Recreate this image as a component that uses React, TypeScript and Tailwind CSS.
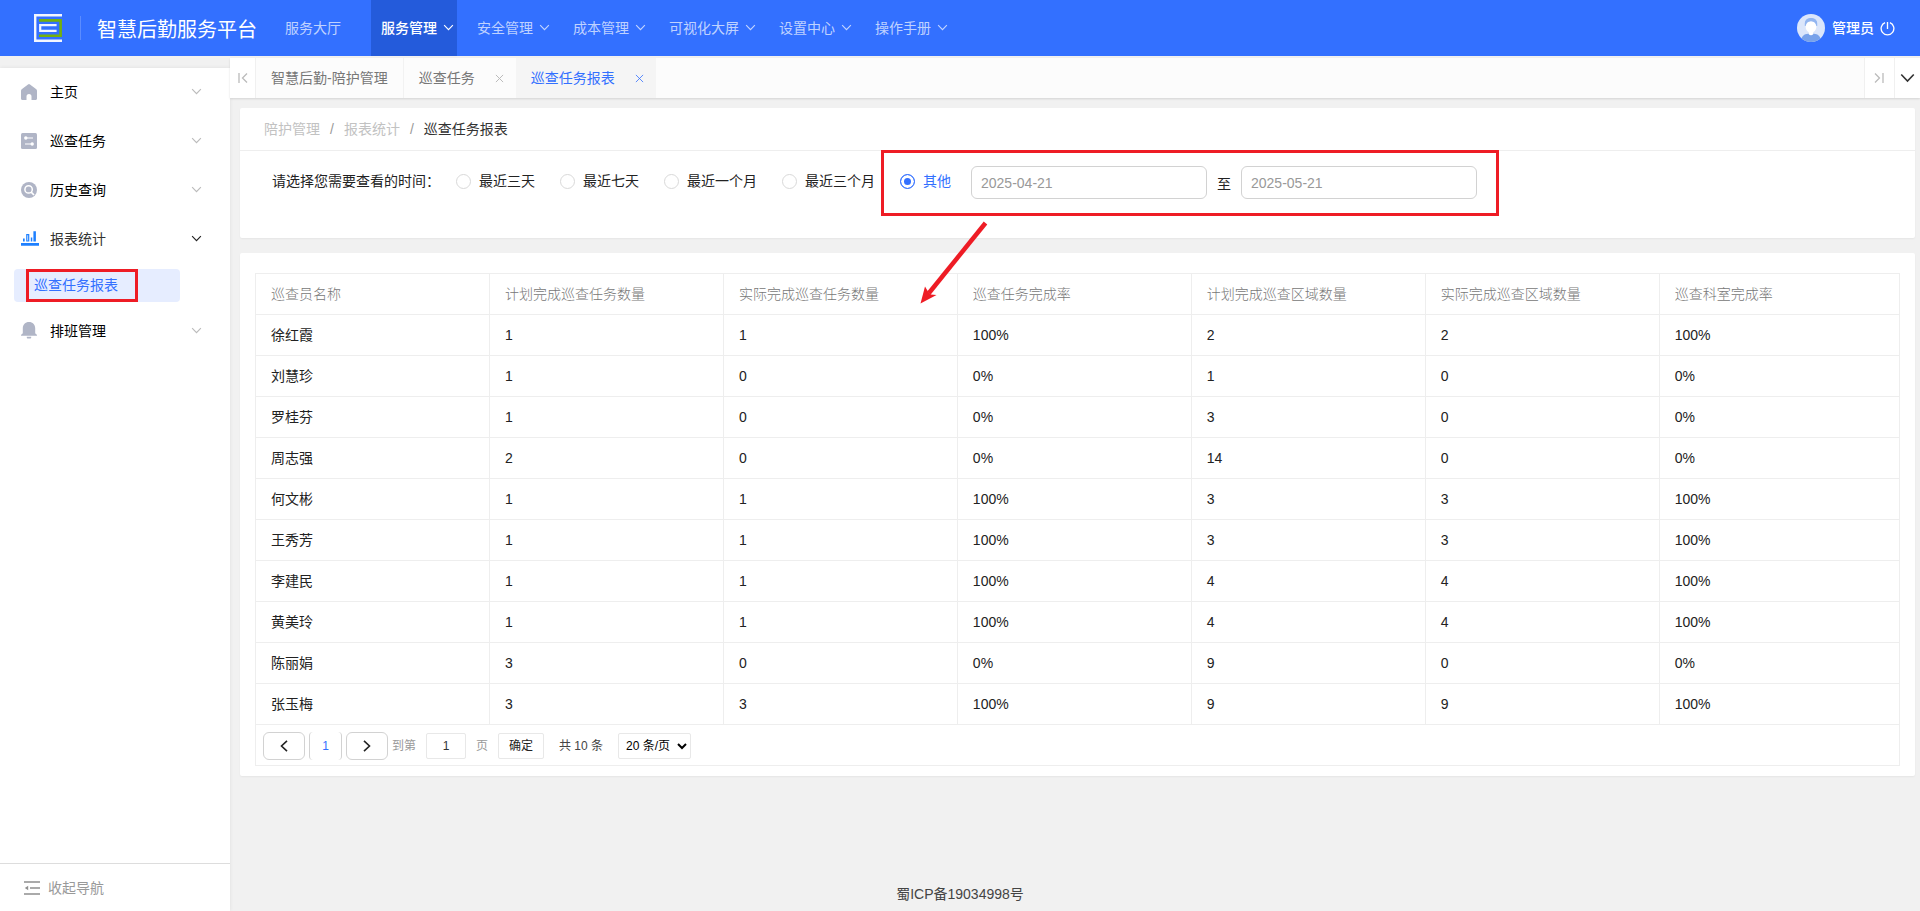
import { FC, ReactNode, useState } from 'react';
import clsx from 'clsx';

const topMenus = [
  { text: '服务大厅', hasChildren: false },
  { text: '服务管理', hasChildren: true, active: true },
  { text: '安全管理', hasChildren: true },
  { text: '成本管理', hasChildren: true },
  { text: '可视化大屏', hasChildren: true },
  { text: '设置中心', hasChildren: true },
  { text: '操作手册', hasChildren: true },
];

const ranges = ['最近三天', '最近七天', '最近一个月', '最近三个月'];

const columns = [
  '巡查员名称',
  '计划完成巡查任务数量',
  '实际完成巡查任务数量',
  '巡查任务完成率',
  '计划完成巡查区域数量',
  '实际完成巡查区域数量',
  '巡查科室完成率',
];

const rows = [
  ['徐红霞', '1', '1', '100%', '2', '2', '100%'],
  ['刘慧珍', '1', '0', '0%', '1', '0', '0%'],
  ['罗桂芬', '1', '0', '0%', '3', '0', '0%'],
  ['周志强', '2', '0', '0%', '14', '0', '0%'],
  ['何文彬', '1', '1', '100%', '3', '3', '100%'],
  ['王秀芳', '1', '1', '100%', '3', '3', '100%'],
  ['李建民', '1', '1', '100%', '4', '4', '100%'],
  ['黄美玲', '1', '1', '100%', '4', '4', '100%'],
  ['陈丽娟', '3', '0', '0%', '9', '0', '0%'],
  ['张玉梅', '3', '3', '100%', '9', '9', '100%'],
];

const Chevron: FC<{ className?: string }> = ({ className }) => (
  <svg viewBox="0 0 12 8" fill="none" stroke="currentColor" className={clsx('shrink-0', className)}>
    <path d="M1 1.2 6 6.4 11 1.2" strokeWidth="1.3" />
  </svg>
);

const CloseIcon: FC = () => (
  <svg viewBox="0 0 10 10" fill="none" stroke="currentColor" className="size-[9px]">
    <path d="M1 1l8 8M9 1l-8 8" strokeWidth="1.1" />
  </svg>
);

const Logo: FC = () => (
  <svg viewBox="0 0 28 28" fill="none" className="size-7">
    <path d="M28 1.2H1.2v25.6H28" stroke="#f2f6ff" strokeWidth="2.4" />
    <path d="M5 6.4h21.6v15.4H5" stroke="#74b00c" strokeWidth="2.6" />
    <path d="M22.6 11.2H6.2v5.6h16.4" stroke="#f2f6ff" strokeWidth="2.2" />
  </svg>
);

const Avatar: FC = () => (
  <svg viewBox="0 0 28 28" className="size-7">
    <clipPath id="avatar-clip">
      <circle cx="14" cy="14" r="14" />
    </clipPath>
    <g clipPath="url(#avatar-clip)">
      <rect width="28" height="28" fill="#dbe6fb" />
      <path d="M4 28c0-6 3.500-8 7-8.200h6c3.500.2 7 2.200 7 8.200z" fill="#78a2ea" />
      <path d="M11.800 17h4.400v3.200c-1 1.400-3.400 1.400-4.400 0z" fill="#fff" />
      <path d="M7.800 12V9.500C7.800 5.800 10.500 4 14 4s6.200 1.800 6.200 5.500V12z" fill="#93b6f0" />
      <ellipse cx="14" cy="12.800" rx="5.400" ry="5.800" fill="#fff" />
      <path d="M8.400 10.500C9 8 11 7.200 14 7.200s5 .8 5.600 3.300V7.500L14 4.800 8.400 7.500z" fill="#93b6f0" />
    </g>
  </svg>
);

const PowerIcon: FC = () => (
  <svg viewBox="0 0 16 16" fill="none" stroke="currentColor" className="size-[15px]">
    <path d="M5.400 1.700a6.800 6.800 0 1 0 5.200 0M8 1v7.500" strokeWidth="1.400" />
  </svg>
);

const HomeIcon: FC = () => (
  <svg viewBox="0 0 16 16" fill="#b0b5c6" className="size-4">
    <path d="M7 .4a1.700 1.700 0 0 1 2 0l6 4.500c.6.5 1 1.100 1 1.900V14.500c0 .9-.6 1.500-1.500 1.500H10.500v-3.500a2.500 2.500 0 0 0-5 0V16H1.500C.6 16 0 15.400 0 14.500V6.800c0-.8.4-1.400 1-1.900z" />
  </svg>
);

const TaskIcon: FC = () => (
  <svg viewBox="0 0 16 16" className="size-4">
    <rect width="16" height="16" rx="1.500" fill="#b0b5c6" />
    <path d="M4 5h8M4 11h8" stroke="#fff" strokeWidth="1.200" />
    <circle cx="4.800" cy="5" r="1.700" fill="#fff" />
    <circle cx="11.200" cy="11" r="1.700" fill="#fff" />
  </svg>
);

const HistoryIcon: FC = () => (
  <svg viewBox="0 0 16 16" className="size-4">
    <circle cx="8" cy="8" r="8" fill="#b0b5c6" />
    <circle cx="7.600" cy="7.400" r="3.700" fill="none" stroke="#fff" strokeWidth="1.500" />
    <path d="M10.200 10.200l2.800 2.800" stroke="#fff" strokeWidth="1.700" />
  </svg>
);

const ReportIcon: FC = () => (
  <svg viewBox="0 0 18 16" className="h-4 w-[18px]">
    <path d="M0 12h18v2.700H0zM2 7.600h1.700v3H2zM9.800 6.600h1.500v4H9.800zM12.400.3h2.500v10.300h-2.500z" fill="#1e80ff" />
    <path d="M5.800 3.600h1.900v6.400H5.800z" fill="none" stroke="#1e80ff" strokeWidth="1.200" />
  </svg>
);

const BellIcon: FC = () => (
  <svg viewBox="0 0 16 17" fill="#b0b5c6" className="h-[17px] w-4">
    <path d="M8 0c3.700 0 6.200 2.700 6.200 6.200v4.500c0 .8.600 1.300 1.500 1.900.6.400.4 1.100-.3 1.100H.6c-.7 0-.9-.7-.3-1.100.9-.6 1.500-1.100 1.500-1.900V6.200C1.800 2.700 4.300 0 8 0zM5.800 14.800h4.400v.8c0 .5-.3.900-.8.900H6.600c-.5 0-.8-.4-.8-.9z" />
  </svg>
);

const CollapseIcon: FC = () => (
  <svg viewBox="0 0 16 14" className="h-3.5 w-4" fill="none" stroke="#8f8f8f" strokeWidth="1.400">
    <path d="M0 1h16M6 7h10M0 13h16" />
    <path d="M4.200 4.800v4.400L.8 7z" fill="#8f8f8f" stroke="none" />
  </svg>
);

const TopBar: FC = () => (
  <header className="flex h-14 shrink-0 items-center bg-[#3370ff] text-white">
    <div className="flex items-center pl-[34px]">
      <Logo />
      <span className="ml-[18px] h-6 w-px bg-white/20" />
      <h1 className="ml-4 pt-1 text-xl leading-7">智慧后勤服务平台</h1>
    </div>
    <nav className="ml-[18px] flex h-full gap-2.5">
      {topMenus.map((menu) => (
        <a
          key={menu.text}
          href="#"
          className={clsx(
            'flex h-full items-center gap-1.5 pl-2.5',
            menu.hasChildren ? 'pr-[3px]' : 'pr-5',
            menu.active ? 'bg-[#245bdb] font-medium text-white' : 'text-white/70',
          )}
        >
          {menu.text}
          {menu.hasChildren && <Chevron className="mb-0.5 h-[7px] w-[11px]" />}
        </a>
      ))}
    </nav>
    <div className="ml-auto flex items-center pr-[25px]">
      <Avatar />
      <span className="ml-[7px] font-medium">管理员</span>
      <button type="button" aria-label="退出" className="ml-1.5">
        <PowerIcon />
      </button>
    </div>
  </header>
);

interface SideItemProps {
  icon: ReactNode;
  text: string;
  open?: boolean;
}

const SideItem: FC<SideItemProps> = ({ icon, text, open }) => (
  <a href="#" className="flex h-[49px] items-center pr-7 pb-0.5 pl-[21px] text-black">
    <span className="flex w-[29px]">{icon}</span>
    <span className={clsx(open ? 'text-[#333]' : 'text-black')}>{text}</span>
    <Chevron className={clsx('ml-auto h-[7px] w-[11px]', open ? 'text-[#222]' : 'text-[#bbb]')} />
  </a>
);

const Sidebar: FC = () => (
  <aside className="mt-3 flex w-[230px] shrink-0 flex-col bg-white shadow-[0_0_4px_rgba(0,0,0,0.08)]">
    <nav className="flex-1">
      <SideItem icon={<HomeIcon />} text="主页" />
      <SideItem icon={<TaskIcon />} text="巡查任务" />
      <SideItem icon={<HistoryIcon />} text="历史查询" />
      <SideItem icon={<ReportIcon />} text="报表统计" open />
      <a
        href="#"
        className="relative mt-[5px] mr-[50px] mb-[5px] ml-3.5 flex h-[33px] items-center rounded bg-[#e6edff] pb-0.5 pl-5 text-[#3370ff]"
      >
        巡查任务报表
        <span className="absolute inset-y-0 left-3 w-28 border-3 border-[#ee1c25]" />
      </a>
      <SideItem icon={<BellIcon />} text="排班管理" />
    </nav>
    <button
      type="button"
      className="flex h-12 items-center gap-2 border-t border-[#ddd] pl-6 text-[#999]"
    >
      <CollapseIcon />
      收起导航
    </button>
  </aside>
);

const TabBar: FC = () => (
  <div className="mt-0.5 flex h-10 shrink-0 bg-[#fcfcfc] text-[#777] shadow-[0_1px_2px_rgba(0,0,0,0.12)]">
    <button
      type="button"
      aria-label="向左"
      className="flex w-[26px] items-center justify-center border-r border-[#f0f0f0] bg-white text-[#bbb]"
    >
      <svg viewBox="0 0 10 10" fill="none" stroke="currentColor" className="size-2.5">
        <path d="M1 0v10" strokeWidth="1.300" />
        <path d="M9 .5 4.500 5 9 9.500" strokeWidth="1.300" />
      </svg>
    </button>
    <a href="#" className="flex items-center border-r border-[#f2f2f2] px-[15px]">
      智慧后勤-陪护管理
    </a>
    <div className="flex items-center pr-3 pl-[15px]">
      <a href="#">巡查任务</a>
      <button type="button" aria-label="关闭巡查任务" className="ml-5 text-[#bbb]">
        <CloseIcon />
      </button>
    </div>
    <div className="flex items-center bg-[#f5f5f5] pr-3 pl-[15px] text-[#3370ff]">
      <a href="#">巡查任务报表</a>
      <button type="button" aria-label="关闭巡查任务报表" className="ml-5 text-[#3370ff]/80">
        <CloseIcon />
      </button>
    </div>
    <button
      type="button"
      aria-label="向右"
      className="ml-auto flex w-[30px] items-center justify-center border-l border-[#f0f0f0] bg-white pr-0.5 text-[#bbb]"
    >
      <svg viewBox="0 0 10 10" fill="none" stroke="currentColor" className="size-2.5">
        <path d="M9 0v10" strokeWidth="1.300" />
        <path d="M1 .5 5.500 5 1 9.500" strokeWidth="1.300" />
      </svg>
    </button>
    <button
      type="button"
      aria-label="更多"
      className="flex w-[26px] items-center justify-center border-l border-[#f0f0f0] bg-white text-[#333]"
    >
      <Chevron className="h-2.5 w-[15px]" />
    </button>
  </div>
);

interface RangeRadioProps {
  text: string;
  checked: boolean;
  onSelect: () => void;
}

const RangeRadio: FC<RangeRadioProps> = ({ text, checked, onSelect }) => (
  <label className={clsx('flex items-center gap-2', checked ? 'text-[#3370ff]' : 'text-[#222]')}>
    <input
      type="radio"
      name="range"
      checked={checked}
      onChange={onSelect}
      className="size-[15px] appearance-none rounded-full border border-[#d9d9d9] bg-white checked:border-[#3370ff] checked:bg-[#3370ff] checked:shadow-[inset_0_0_0_3px_#fff]"
    />
    {text}
  </label>
);

const FilterCard: FC = () => {
  const [range, setRange] = useState('其他');

  return (
    <section className="rounded-xs bg-white shadow-[0_1px_2px_rgba(0,0,0,0.05)]">
      <div className="flex h-[43px] items-center gap-2.5 border-b border-[#eee] px-6">
        <a href="#" className="text-[#c2c2c2]">
          陪护管理
        </a>
        <span className="text-[#999]">/</span>
        <a href="#" className="text-[#c2c2c2]">
          报表统计
        </a>
        <span className="text-[#999]">/</span>
        <span className="text-[#333]">巡查任务报表</span>
      </div>
      <div className="flex items-start px-8 pt-[15px] pb-[39px]">
        <span className="w-[184px] py-[5px] leading-5 text-[#222]">请选择您需要查看的时间：</span>
        <div className="flex gap-[25px] py-[5px] leading-5">
          {ranges.map((text) => (
            <RangeRadio
              key={text}
              text={text}
              checked={range === text}
              onSelect={() => setRange(text)}
            />
          ))}
        </div>
        <div className="relative ml-[25px] flex items-start">
          <div className="py-[5px] leading-5">
            <RangeRadio text="其他" checked={range === '其他'} onSelect={() => setRange('其他')} />
          </div>
          <input
            type="text"
            aria-label="开始日期"
            defaultValue="2025-04-21"
            className="ml-5 h-[33px] w-[236px] rounded-md border border-[#d2d2d2] px-[9px] text-[#999]"
          />
          <span className="mx-2.5 pt-2 leading-5 text-[#222]">至</span>
          <input
            type="text"
            aria-label="结束日期"
            defaultValue="2025-05-21"
            className="h-[33px] w-[236px] rounded-md border border-[#d2d2d2] px-[9px] text-[#999]"
          />
          <span className="pointer-events-none absolute -top-4 -right-[22px] -bottom-[17px] -left-[19px] border-3 border-[#ee1c25]" />
          <svg
            viewBox="0 0 68 84"
            className="pointer-events-none absolute top-[54px] left-5 h-[84px] w-[68px]"
          >
            <path d="M65.500 3 9 73" stroke="#ee1c25" strokeWidth="4.500" fill="none" />
            <path d="M.5 83.500 5 66.500 8 71.500 11 74.500 16.500 75z" fill="#ee1c25" />
          </svg>
        </div>
      </div>
    </section>
  );
};

const Pagination: FC = () => (
  <div className="flex h-10 items-center pt-px pl-[7px] text-xs">
    <button
      type="button"
      aria-label="上一页"
      className="flex h-7 w-[42px] items-center justify-center rounded-md border border-[#d2d2d2] text-[#222]"
    >
      <svg viewBox="0 0 8 12" fill="none" stroke="currentColor" className="h-3 w-2">
        <path d="M7 .8 1.500 6 7 11.200" strokeWidth="1.600" />
      </svg>
    </button>
    <button
      type="button"
      aria-current="page"
      className="ml-1 h-7 w-[33px] rounded-sm border-x border-[#d2d2d2] text-[#3370ff]"
    >
      1
    </button>
    <button
      type="button"
      aria-label="下一页"
      className="ml-1 flex h-7 w-[42px] items-center justify-center rounded-md border border-[#d2d2d2] text-[#222]"
    >
      <svg viewBox="0 0 8 12" fill="none" stroke="currentColor" className="h-3 w-2">
        <path d="M1 .8 6.500 6 1 11.200" strokeWidth="1.600" />
      </svg>
    </button>
    <label className="ml-1 flex items-center gap-2.5 text-[#999]">
      到第
      <input
        type="text"
        defaultValue="1"
        className="h-[26px] w-10 rounded-xs border border-[#e8e8e8] text-center text-[#333]"
      />
      页
    </label>
    <button
      type="button"
      className="ml-2.5 h-[26px] w-[46px] rounded-xs border border-[#e8e8e8] text-[#222]"
    >
      确定
    </button>
    <span className="ml-[15px] text-[#444]">共 10 条</span>
    <select
      aria-label="每页条数"
      className="ml-[15px] h-[26px] w-[73px] rounded-xs border border-[#e8e8e8] bg-white pl-[3px] text-black"
    >
      <option>20 条/页</option>
      <option>50 条/页</option>
    </select>
  </div>
);

const ReportTable: FC = () => (
  <section className="mt-[15px] rounded-xs bg-white px-[15px] pt-5 pb-2.5 shadow-[0_1px_2px_rgba(0,0,0,0.05)]">
    <div className="border border-[#eee]">
      <table className="w-full table-fixed border-separate border-spacing-0 text-left">
        <thead>
          <tr>
            {columns.map((column) => (
              <th
                key={column}
                className="h-[41px] w-[14.24%] border-r border-b border-[#eee] px-[15px] font-light text-[#777] last:w-auto last:border-r-0"
              >
                {column}
              </th>
            ))}
          </tr>
        </thead>
        <tbody>
          {rows.map((row) => (
            <tr key={row[0]}>
              {row.map((cell, index) => (
                <td
                  key={index}
                  className="h-[41px] border-r border-b border-[#eee] px-[15px] text-[#222] last:border-r-0"
                >
                  {cell}
                </td>
              ))}
            </tr>
          ))}
        </tbody>
      </table>
      <Pagination />
    </div>
  </section>
);

export default function App() {
  return (
    <div className="flex min-h-screen flex-col bg-[#f1f1f1] font-['Liberation_Sans','Noto_Sans_CJK_SC',sans-serif] text-sm">
      <TopBar />
      <div className="flex flex-1">
        <Sidebar />
        <div className="flex min-w-0 flex-1 flex-col">
          <TabBar />
          <main className="flex-1 pt-2.5 pr-[5px] pl-2.5">
            <FilterCard />
            <ReportTable />
          </main>
          {/* centred on the window, not on the content column */}
          <footer className="pr-[230px] pb-[7px] text-center text-[#444]">蜀ICP备19034998号</footer>
        </div>
      </div>
    </div>
  );
}
